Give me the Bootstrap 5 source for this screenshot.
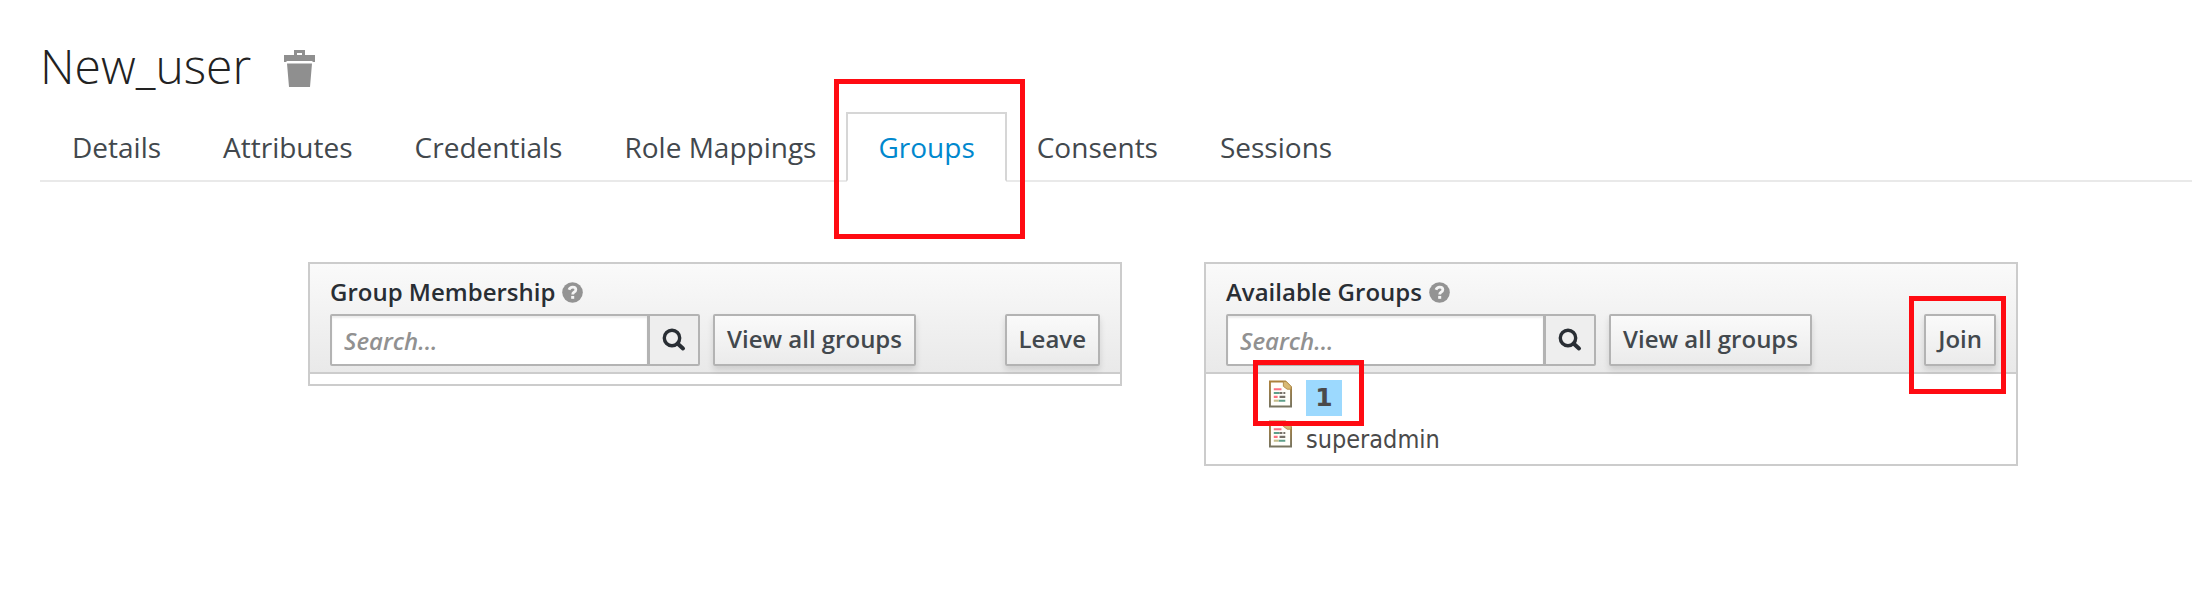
<!DOCTYPE html>
<html lang="en">
<head>
<meta charset="utf-8">
<meta name="viewport" content="width=device-width, initial-scale=1">
<title>New_user</title>
<link rel="stylesheet" href="https://cdn.jsdelivr.net/npm/bootstrap@5.3.0/dist/css/bootstrap.min.css">
<style>
body { font-family: "Open Sans", "Noto Sans", sans-serif; font-size: 24px; line-height: 36px; color: #292e34; background: #fff; }
.page-main { padding: 32px 0 32px 40px; }
.page-title { font-size: 48px; font-weight: 300; line-height: 68px; color: #222; }
.trash-btn { line-height: 0; margin: 4px 0 0 33px; }
.user-tabs { border-bottom: 2px solid #e9e9e9; margin-top: 12px; }
.user-tabs .nav-link { font-size: 28px; line-height: 42px; color: #42484d; padding: 12px 30px; border: 2px solid transparent; border-radius: 0; margin: 0 -2px -2px 0; }
.user-tabs .nav-link.active { color: #0088ce; background: #fff; border-color: #d6d6d6 #d6d6d6 #fff; }
.group-panels { margin: 80px 174px 0 268px; gap: 82px; }
.group-panel { flex: 1 1 0; min-width: 0; border: 2px solid #ccc; }
.panel-top { padding: 8px 20px 6px; border-bottom: 2px solid #ccc; background: linear-gradient(#fafafa, #e9e9e9); }
.panel-title { font-weight: 600; line-height: 40px; padding-bottom: 2px; gap: 7px; }
.search-box { width: 370px; margin-right: 13px; }
.search-box .form-control { height: 52px; border: 2px solid #b3b3b3; border-radius: 2px; font-size: 24px; font-weight: 600; padding: 2px 12px; box-shadow: inset 0 2px 2px rgba(0,0,0,.075); }
.search-box .form-control::placeholder { color: #919191; font-style: italic; opacity: 1; }
.search-box .btn { width: 52px; margin-left: -2px; padding: 0; border: 2px solid #b3b3b3; border-radius: 2px; background: #eee; line-height: 0; }
.tool-btn { height: 52px; border: 2px solid #b3b3b3; border-radius: 2px; padding: 0 12px 2px; font-size: 24px; font-weight: 600; line-height: 36px; color: #42484d; background: linear-gradient(#fafafa, #ebebeb); box-shadow: 0 4px 6px rgba(0,0,0,.12); }
.tree-area { min-height: 10px; }
.group-tree { padding: 6px 0 4px 63px; font-family: "DejaVu Sans Condensed", "DejaVu Sans", sans-serif; font-stretch: condensed; font-size: 25px; color: #4a4a4a; }
.group-tree li { height: 40px; }
.group-tree .tree-node { gap: 14px; }
.group-tree .node-name { line-height: 36px; }
.group-tree .chosen { font-family: "DejaVu Sans", sans-serif; font-stretch: normal; font-size: 25px; font-weight: 700; background: #9cd9fe; width: 36px; text-align: center; }
.group-tree .node-name:not(.chosen) { padding-top: 2px; }
.red-mark { position: absolute; border: 5px solid #ff0b12; pointer-events: none; z-index: 2; }
.mark-tab { inset: -33px -20px -59px -12px; }
.mark-node { inset: -20px -22px -10px -16px; }
.mark-join { inset: -18px -10px -28px -15px; }
</style>
</head>
<body>
<svg class="position-absolute" width="0" height="0" aria-hidden="true" xmlns="http://www.w3.org/2000/svg">
  <defs>
  <linearGradient id="doc-edge" x1="0" y1="0" x2="0" y2="1"><stop offset="0" stop-color="#ac813b"/><stop offset="1" stop-color="#777460"/></linearGradient>
  </defs>
  <symbol id="icon-search" viewBox="0 0 24 24"><circle cx="10" cy="10" r="7.7" fill="none" stroke="#292e34" stroke-width="3.4"/><path d="M15.5 15.5L21 20.5" stroke="#292e34" stroke-width="4" stroke-linecap="round"/></symbol>
  <symbol id="icon-help" viewBox="0 0 22 22"><circle cx="11" cy="11" r="10.8" fill="#939393"/><path d="M7.3 8.2C8 6.3 9.4 5.4 11.2 5.4C13.1 5.4 14.5 6.4 14.5 8.1C14.5 9.4 13.7 10.1 12.5 10.8C11.5 11.4 11.2 11.8 11.2 13" fill="none" stroke="#f4f4f4" stroke-width="2.9"/><rect x="9.6" y="14.6" width="3.2" height="3" fill="#f4f4f4"/></symbol>
  <symbol id="icon-doc" viewBox="0 0 24 28"><path d="M1 1H17L23 7V27H1Z" fill="#fffefa" stroke="url(#doc-edge)" stroke-width="2"/><path d="M15 1L18 1L23 6V9H19L15 6Z" fill="#d8b974" stroke="#b28d4b"/><path d="M5 9H13M5 17H9" stroke="#fa7080" stroke-width="2.2"/><path d="M5 13H11M10 21H17" stroke="#5d9e8a" stroke-width="2.2"/><path d="M5 21H10" stroke="#c5bd8a" stroke-width="2.2"/><path d="M11 13H14M15 13H17M11 17H17" stroke="#777068" stroke-width="2.2"/></symbol>
</svg>
<main class="page-main">
  <div class="d-flex align-items-center">
    <h1 class="page-title mb-0">New_user</h1>
    <button class="trash-btn btn border-0 p-0" type="button" aria-label="Delete user">
      <svg width="31" height="37" viewBox="0 0 31 37"><path fill="#8f8f8f" fill-rule="evenodd" d="M10 0H21V5H31V12H29L28 11H3L2 12H0V5H10ZM13 3V5H18V3ZM3 13.500H28L26 37H5Z"/></svg>
    </button>
  </div>
  <ul class="nav nav-tabs user-tabs">
    <li class="nav-item"><a class="nav-link" href="#">Details</a></li>
    <li class="nav-item"><a class="nav-link" href="#">Attributes</a></li>
    <li class="nav-item"><a class="nav-link" href="#">Credentials</a></li>
    <li class="nav-item"><a class="nav-link" href="#">Role Mappings</a></li>
    <li class="nav-item position-relative"><a class="nav-link active" aria-current="page" href="#">Groups</a><span class="red-mark mark-tab"></span></li>
    <li class="nav-item"><a class="nav-link" href="#">Consents</a></li>
    <li class="nav-item"><a class="nav-link" href="#">Sessions</a></li>
  </ul>
  <div class="group-panels d-flex align-items-start">
    <section class="group-panel">
      <div class="panel-top">
        <div class="panel-title d-flex align-items-center"><label for="member-search">Group Membership</label><svg width="21" height="21"><use href="#icon-help"/></svg></div>
        <div class="d-flex align-items-center">
          <div class="input-group search-box flex-nowrap">
            <input class="form-control" id="member-search" type="text" placeholder="Search...">
            <button class="btn" type="button" aria-label="Search"><svg width="24" height="24"><use href="#icon-search"/></svg></button>
          </div>
          <button class="btn tool-btn" type="button">View all groups</button>
          <button class="btn tool-btn ms-auto" type="button">Leave</button>
        </div>
      </div>
      <div class="tree-area"></div>
    </section>
    <section class="group-panel">
      <div class="panel-top">
        <div class="panel-title d-flex align-items-center"><label for="available-search">Available Groups</label><svg width="21" height="21"><use href="#icon-help"/></svg></div>
        <div class="d-flex align-items-center">
          <div class="input-group search-box flex-nowrap">
            <input class="form-control" id="available-search" type="text" placeholder="Search...">
            <button class="btn" type="button" aria-label="Search"><svg width="24" height="24"><use href="#icon-search"/></svg></button>
          </div>
          <button class="btn tool-btn" type="button">View all groups</button>
          <div class="position-relative ms-auto"><button class="btn tool-btn d-block" type="button">Join</button><span class="red-mark mark-join"></span></div>
        </div>
      </div>
      <div class="tree-area">
        <ul class="group-tree list-unstyled mb-0">
          <li class="d-flex align-items-start"><div class="tree-node position-relative d-flex align-items-start"><svg width="23" height="28"><use href="#icon-doc"/></svg><span class="node-name chosen">1</span><span class="red-mark mark-node"></span></div></li>
          <li class="d-flex align-items-start"><div class="tree-node d-flex align-items-start"><svg width="23" height="28"><use href="#icon-doc"/></svg><span class="node-name">superadmin</span></div></li>
        </ul>
      </div>
    </section>
  </div>
</main>
<script src="https://cdn.jsdelivr.net/npm/bootstrap@5.3.0/dist/js/bootstrap.bundle.min.js"></script>
</body>
</html>
